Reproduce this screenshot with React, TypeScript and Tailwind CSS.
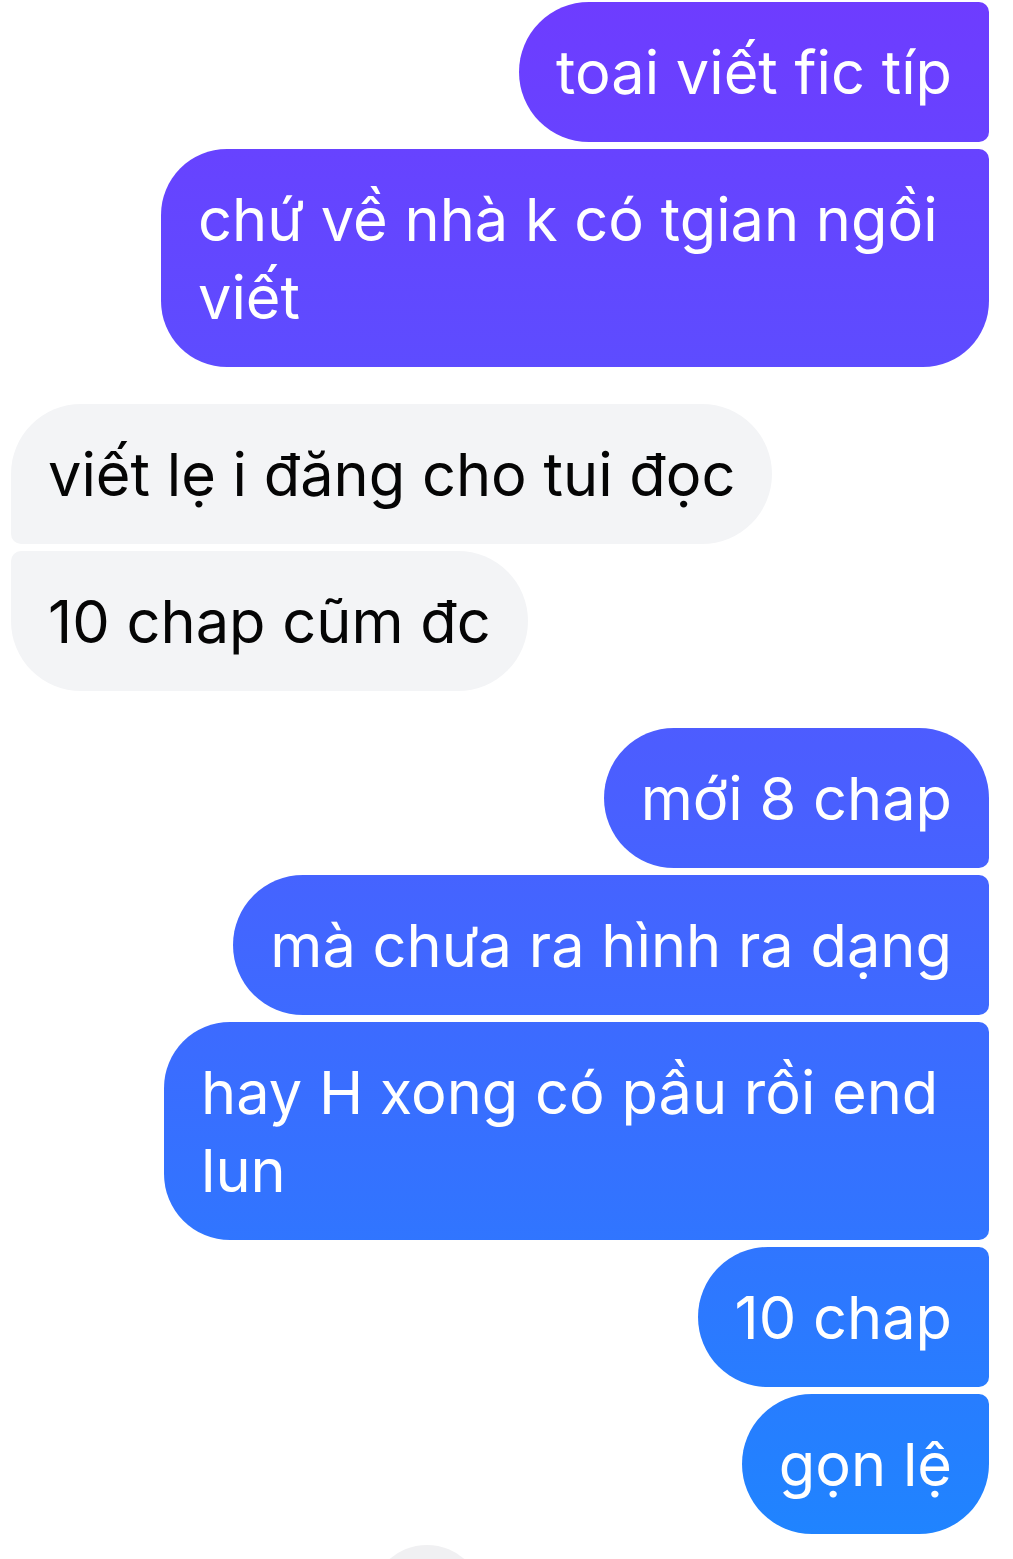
import React from "react";

type Msg = { text: string; mine: boolean; shape: string; width?: string };

const font = { fontFamily: "Inter, 'Noto Sans', sans-serif" };

const sent =
  "bg-fixed bg-[linear-gradient(180deg,#6e3cff_0px,#4a5fff_790px,#1e85ff_1559px)] text-white";
const received = "bg-[#f3f4f6] text-[#050505]";

const groups: Msg[][] = [
  [
    { text: "toai viết fic típ", mine: true, shape: "rounded-l-[70px] rounded-r-[10px]" },
    {
      text: "chứ về nhà k có tgian ngồi viết",
      mine: true,
      shape: "rounded-l-[66px] rounded-tr-[10px] rounded-br-[66px]",
      width: "w-[828px]",
    },
  ],
  [
    { text: "viết lẹ i đăng cho tui đọc", mine: false, shape: "rounded-r-[70px] rounded-tl-[70px] rounded-bl-[10px]" },
    { text: "10 chap cũm đc", mine: false, shape: "rounded-r-[70px] rounded-tl-[10px] rounded-bl-[70px]" },
  ],
  [
    { text: "mới 8 chap", mine: true, shape: "rounded-l-[70px] rounded-tr-[70px] rounded-br-[10px]" },
    { text: "mà chưa ra hình ra dạng", mine: true, shape: "rounded-l-[70px] rounded-r-[10px]" },
    {
      text: "hay H xong có pầu rồi end lun",
      mine: true,
      shape: "rounded-l-[66px] rounded-r-[10px]",
      width: "w-[825px]",
    },
    { text: "10 chap", mine: true, shape: "rounded-l-[70px] rounded-r-[10px]" },
    { text: "gọn lệ", mine: true, shape: "rounded-l-[70px] rounded-tr-[10px] rounded-br-[70px]" },
  ],
];

function Bubble({ m }: { m: Msg }) {
  return (
    <div
      className={`${m.mine ? sent : received} ${m.shape} ${m.width ?? ""} px-[37px] py-[31px] text-[59.5px] leading-[78px]`}
      style={font}
    >
      {m.text}
    </div>
  );
}

export default function App() {
  return (
    <div className="relative h-[1559px] w-[1013px] overflow-hidden bg-white pt-[2px]">
      <div className="flex flex-col gap-[37px]">
        {groups.map((g, i) => (
          <div
            key={i}
            className={`flex flex-col gap-[7px] ${g[0].mine ? "items-end pr-[24px]" : "items-start pl-[11px]"}`}
          >
            {g.map((m, j) => (
              <Bubble key={j} m={m} />
            ))}
          </div>
        ))}
      </div>
      <div className="mt-[11px] flex pl-[370px]">
        <div className="h-[114px] w-[114px] rounded-full bg-[#f0f0f2]" />
      </div>
    </div>
  );
}
